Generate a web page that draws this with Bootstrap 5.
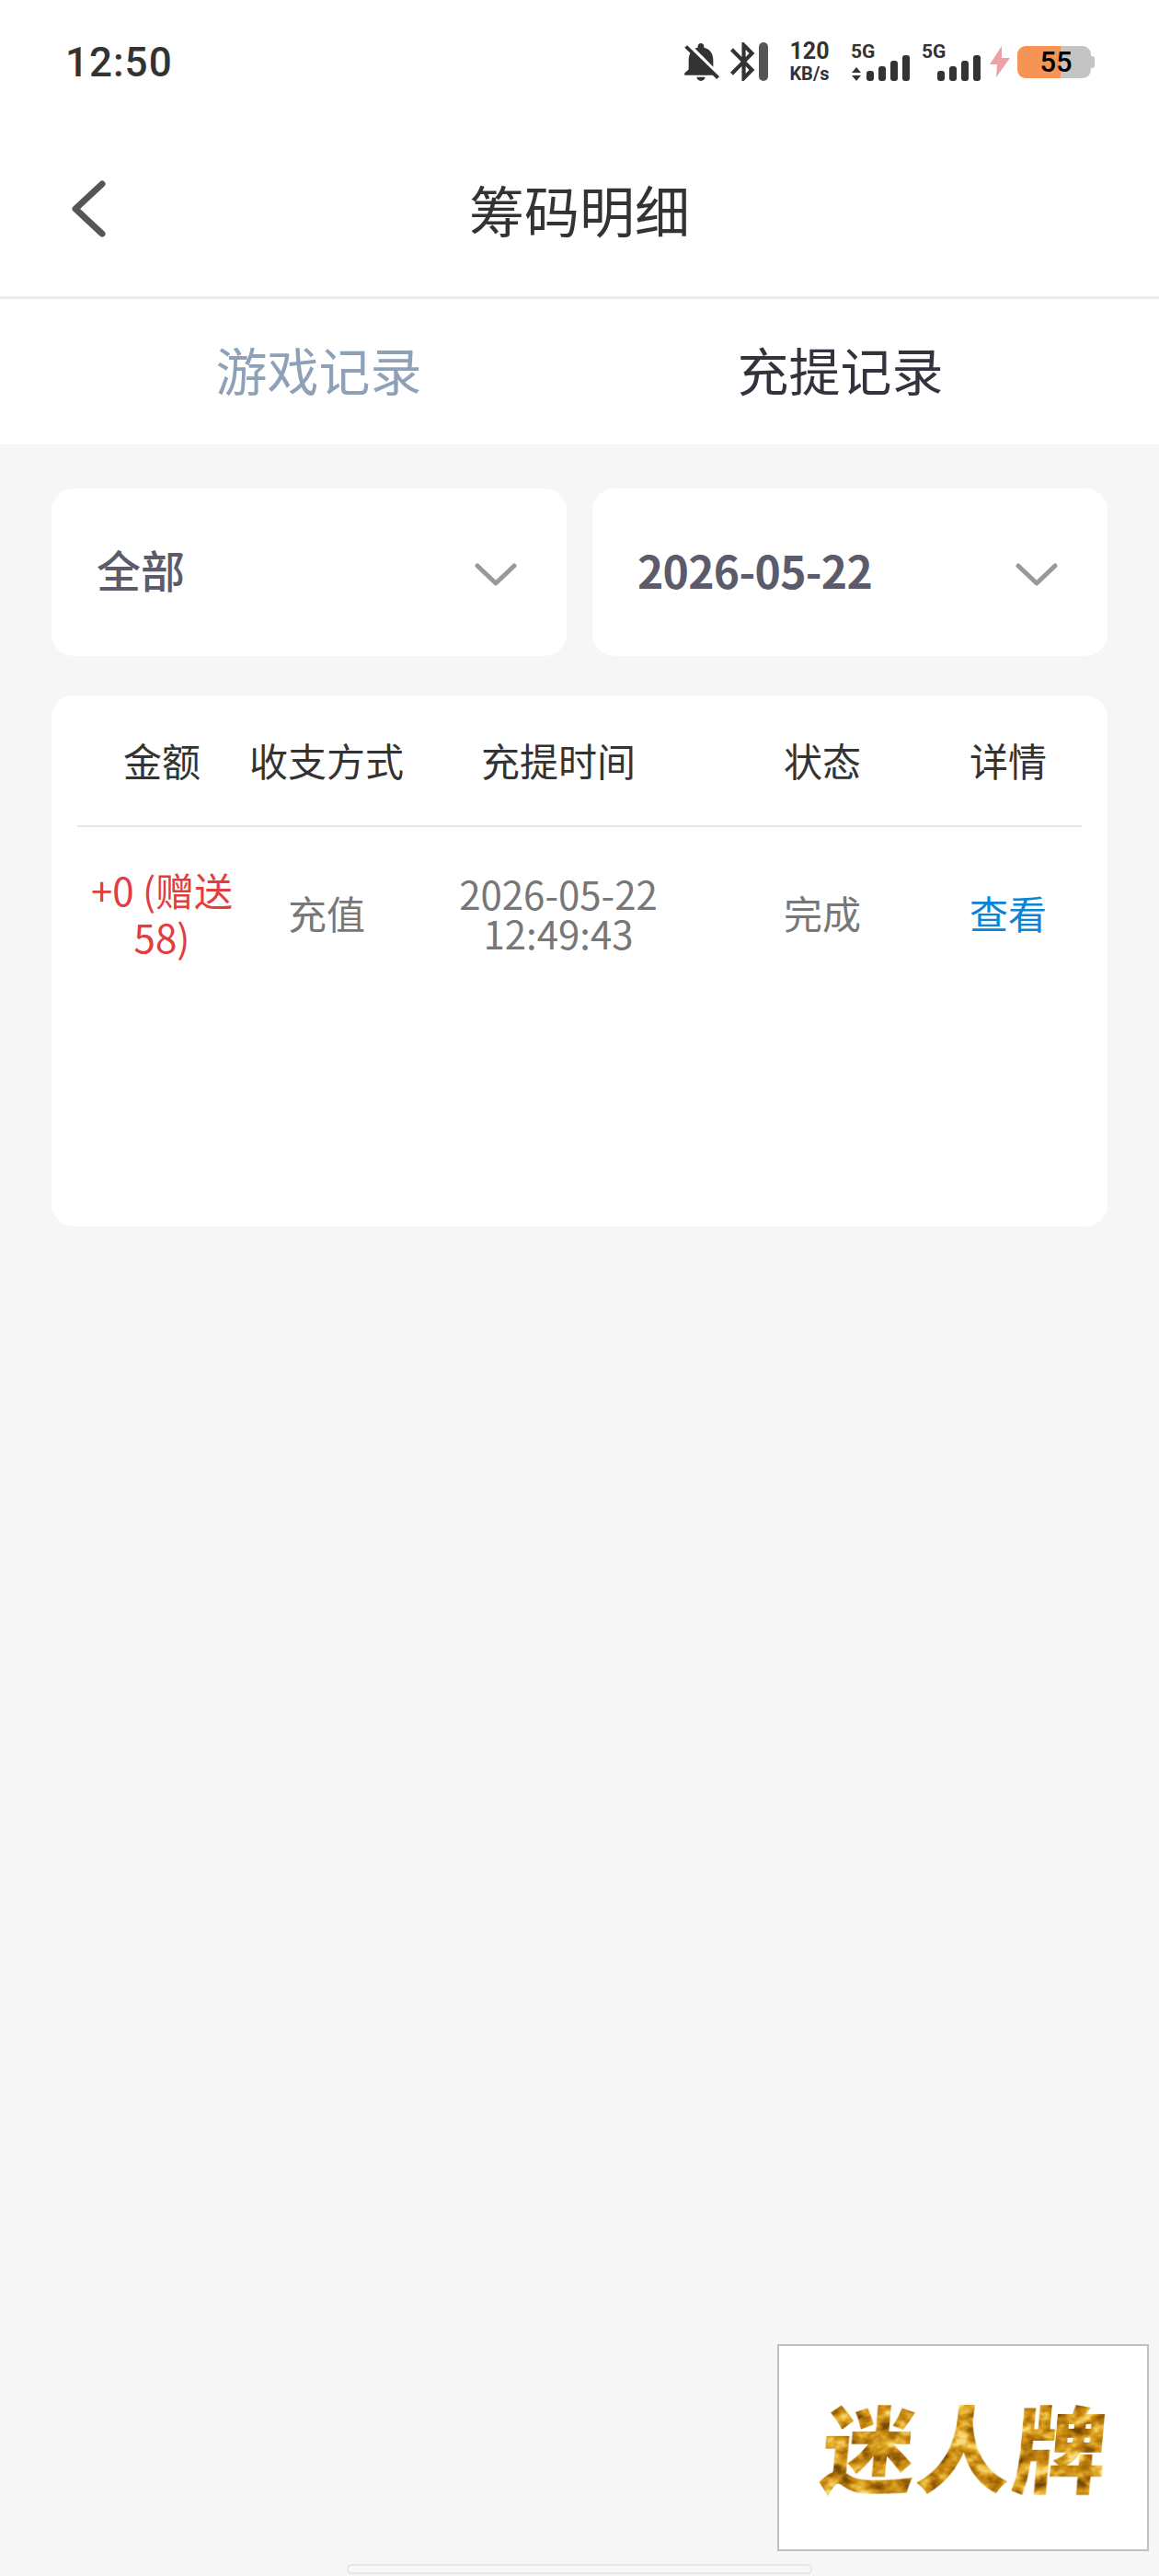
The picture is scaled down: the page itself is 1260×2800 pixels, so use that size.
<!DOCTYPE html>
<html lang="zh-CN">
  <head>
    <meta charset="UTF-8" />
    <meta name="viewport" content="width=device-width, initial-scale=1.0" />
    <title>筹码明细</title>
    <link href="https://cdn.jsdelivr.net/npm/bootstrap@5.3.0/dist/css/bootstrap.min.css" rel="stylesheet" />
    <style>
      body {
        background-color: #f6f6f6;
        font-family: "Noto Sans CJK SC", "Noto Sans", sans-serif;
        min-height: 2800px;
        position: relative;
      }
      /* status bar */
      .status-strip {
        height: 134px;
        padding: 44px 70px 0 71px;
        background-color: #fff;
        color: #333;
      }
      .status-time {
        font: 500 44px/48px Roboto, sans-serif;
        letter-spacing: 1px;
      }
      .status-icons {
        height: 44px;
        font-family: Roboto, sans-serif;
      }
      .speed-box {
        width: 44px;
        margin: 0 23px;
        text-align: center;
        font-weight: 700;
      }
      .speed-num {
        font-size: 25px;
        line-height: 25px;
        margin-bottom: 4px;
      }
      .speed-unit {
        font-size: 20px;
        line-height: 16px;
      }
      .net-group {
        width: 66px;
      }
      .net-label {
        font-size: 21px;
        font-weight: 700;
        line-height: 20px;
        margin-bottom: -6px;
      }
      .power-group {
        height: 48px;
        margin-bottom: -3px;
      }
      .batt-box {
        width: 80px;
        height: 35px;
        border-radius: 9px;
        background: linear-gradient(90deg, #f59455 0 47px, #c4c4c4 47px);
        color: #000;
        font-size: 31px;
        font-weight: 500;
        line-height: 35px;
        text-align: center;
        padding-left: 4px;
      }
      .batt-nub {
        width: 4px;
        height: 13px;
        border-radius: 0 3px 3px 0;
        background-color: #c4c4c4;
      }
      /* title bar */
      .title-bar {
        height: 191px;
        padding-bottom: 3px;
        background-color: #fff;
        border-bottom: 3px solid #ebebeb;
      }
      .back-slot {
        width: 180px;
        padding-left: 76px;
      }
      .title-text {
        font-size: 60px;
        color: #333;
        line-height: 1;
      }
      /* tabs */
      .tab-strip {
        height: 158px;
        padding: 0 63px 6px;
        background-color: #fff;
        font-size: 56px;
      }
      .tab-item {
        width: 50%;
        text-align: center;
        color: #8fa1b9;
      }
      .tab-on {
        color: #33333f;
      }
      /* filters */
      .filter-row {
        padding: 48px 56px 0;
        gap: 28px;
      }
      .filter-box {
        height: 182px;
        background-color: #fff;
        border-radius: 24px;
        padding: 0 54px 0 49px;
        font-size: 48px;
        font-weight: 500;
        color: #5b5b6b;
      }
      .filter-box span {
        margin-bottom: 9px;
      }
      .filter-box .filter-date {
        font-weight: 700;
        letter-spacing: -0.7px;
        margin-bottom: 6px;
      }
      .filter-box svg {
        margin-top: 6px;
      }
      /* table card */
      .record-card {
        margin: 43px 56px 0;
        height: 577px;
        padding: 8px 28px 0;
        background-color: #fff;
        border-radius: 24px;
      }
      .record-table {
        table-layout: fixed;
        width: 100%;
        margin: 0;
        font-size: 42px;
      }
      .record-table th,
      .record-table td {
        border: 0;
        padding: 0;
        text-align: center;
        vertical-align: middle;
        font-weight: 400;
      }
      .record-table th {
        height: 134px;
        padding-bottom: 10px;
        color: #333;
        border-bottom: 2px solid #e6e6e6;
      }
      .record-table td {
        height: 196px;
        padding-bottom: 10px;
        color: #777;
      }
      .record-table td.cell-amount {
        color: #e33d3d;
        line-height: 51px;
        padding: 0 8px 10px;
      }
      .record-table td.cell-time {
        line-height: 43px;
      }
      .record-table td.cell-link {
        color: #0a84d8;
      }
      /* floating logo */
      .logo-box {
        position: absolute;
        left: 845px;
        top: 2548px;
        width: 404px;
        height: 225px;
        padding: 0 0 6px 6px;
        background-color: #fff;
        border: 2px solid #c0c0c0;
      }
      .logo-text {
        font-size: 102px;
        font-weight: 900;
        line-height: 1;
        color: #b8860b;
        letter-spacing: 2px;
        transform: skewX(-5deg);
        filter: url(#goldLeaf);
      }
      .home-pill {
        position: absolute;
        left: 377px;
        top: 2787px;
        width: 506px;
        height: 11px;
        background-color: #f8f8f8;
        border: 2px solid #e6e6e6;
        border-radius: 6px;
      }
    </style>
  </head>
  <body>
    <!-- gold texture for the logo text -->
    <svg width="0" height="0" class="d-block">
      <filter id="goldLeaf" x="-5%" y="-5%" width="110%" height="110%" color-interpolation-filters="sRGB">
        <feTurbulence type="fractalNoise" baseFrequency="0.05 0.07" numOctaves="3" seed="7" />
        <feColorMatrix type="matrix" values="2 0 0 0 -0.5  2 0 0 0 -0.5  2 0 0 0 -0.5  0 0 0 0 1" />
        <feComponentTransfer>
          <feFuncR type="table" tableValues="0.45 0.66 0.80 0.90 0.97" />
          <feFuncG type="table" tableValues="0.28 0.43 0.55 0.70 0.86" />
          <feFuncB type="table" tableValues="0.02 0.04 0.08 0.20 0.48" />
        </feComponentTransfer>
        <feComposite in2="SourceAlpha" operator="in" />
      </filter>
    </svg>

    <div class="status-strip d-flex justify-content-between">
      <div class="status-time">12:50</div>
      <div class="status-icons d-flex align-items-end">
        <svg width="40" height="42" viewBox="3 2 18 20" fill="#333" preserveAspectRatio="none">
          <path d="M20 18.69L7.84 6.14 5.27 3.49 4 4.76l2.8 2.8v.01c-.52.99-.8 2.16-.8 3.42v5l-2 2v1h13.73l2 2L21 19.72l-1-1.03zM12 22c1.11 0 2-.89 2-2h-4c0 1.11.89 2 2 2zm6-7.32V11c0-3.08-1.64-5.64-4.5-6.32V4c0-.83-.67-1.5-1.5-1.5s-1.5.67-1.5 1.5v.68c-.15.03-.29.08-.42.12-.1.03-.2.07-.3.11h-.01c-.2.08-.4.17-.59.27-.01 0-.01 0-.02.01L18 14.68z" />
        </svg>
        <svg width="27" height="42" viewBox="5 2 13 20" fill="#333" preserveAspectRatio="none" style="margin-left: 12px">
          <path d="M17.71 7.71L12 2h-1v7.59L6.41 5 5 6.41 10.59 12 5 17.59 6.41 19 11 14.41V22h1l5.71-5.71-4.3-4.29 4.3-4.29zM13 5.83l1.88 1.88L13 9.59V5.83zm1.88 10.46L13 18.17v-3.76l1.88 1.88z" />
        </svg>
        <svg class="ms-1" width="10" height="42" viewBox="0 0 10 42"><rect width="10" height="42" rx="5" fill="#555" /></svg>
        <div class="speed-box">
          <div class="speed-num">120</div>
          <div class="speed-unit">KB/s</div>
        </div>
        <div class="net-group d-flex flex-column">
          <div class="net-label">5G</div>
          <svg width="66" height="28" viewBox="0 0 66 28" fill="#333">
            <path d="M6 13l5 6H1zM6 28l5-6H1z" />
            <rect x="17" y="17" width="8" height="11" rx="3" />
            <rect x="30" y="12" width="8" height="16" rx="3" />
            <rect x="43" y="6" width="8" height="22" rx="3" />
            <rect x="56" y="0" width="8" height="28" rx="3" />
          </svg>
        </div>
        <div class="net-group d-flex flex-column" style="margin-left: 11px">
          <div class="net-label">5G</div>
          <svg width="66" height="28" viewBox="0 0 66 28" fill="#333">
            <rect x="17" y="17" width="8" height="11" rx="3" />
            <rect x="30" y="12" width="8" height="16" rx="3" />
            <rect x="43" y="6" width="8" height="22" rx="3" />
            <rect x="56" y="0" width="8" height="28" rx="3" />
          </svg>
        </div>
        <div class="power-group d-flex align-items-center ms-2">
          <svg width="22" height="34" viewBox="0 0 22 34" fill="#eda0a5">
            <path d="M13 0L0 20h8L7 34 22 13h-9z" />
          </svg>
          <div class="batt-box ms-2">55</div>
          <div class="batt-nub"></div>
        </div>
      </div>
    </div>

    <div class="title-bar d-flex align-items-center">
      <div class="back-slot">
        <svg class="d-block" width="40" height="64" viewBox="0 0 40 64" fill="none" stroke="#555" stroke-width="7" stroke-linecap="round" stroke-linejoin="round">
          <path d="M35 5L6 32l29 27" />
        </svg>
      </div>
      <div class="title-text flex-grow-1 text-center">筹码明细</div>
      <div class="back-slot"></div>
    </div>

    <div class="tab-strip d-flex align-items-center">
      <div class="tab-item">游戏记录</div>
      <div class="tab-item tab-on">充提记录</div>
    </div>

    <div class="filter-row d-flex">
      <div class="filter-box flex-fill w-50 d-flex align-items-center justify-content-between">
        <span>全部</span>
        <svg width="46" height="26" viewBox="0 0 46 26" fill="none" stroke="#999" stroke-width="5" stroke-linecap="round" stroke-linejoin="round">
          <path d="M3 3l20 19L43 3" />
        </svg>
      </div>
      <div class="filter-box flex-fill w-50 d-flex align-items-center justify-content-between">
        <span class="filter-date">2026-05-22</span>
        <svg width="46" height="26" viewBox="0 0 46 26" fill="none" stroke="#999" stroke-width="5" stroke-linecap="round" stroke-linejoin="round">
          <path d="M3 3l20 19L43 3" />
        </svg>
      </div>
    </div>

    <div class="record-card">
      <table class="table record-table">
        <colgroup>
          <col style="width: 184px" />
          <col style="width: 174px" />
          <col style="width: 330px" />
          <col style="width: 244px" />
          <col style="width: 160px" />
        </colgroup>
        <thead>
          <tr>
            <th>金额</th>
            <th>收支方式</th>
            <th>充提时间</th>
            <th>状态</th>
            <th>详情</th>
          </tr>
        </thead>
        <tbody>
          <tr>
            <td class="cell-amount">+0 (赠送 58)</td>
            <td>充值</td>
            <td class="cell-time">2026-05-22<br />12:49:43</td>
            <td>完成</td>
            <td class="cell-link">查看</td>
          </tr>
        </tbody>
      </table>
    </div>

    <div class="logo-box d-flex align-items-center justify-content-center">
      <span class="logo-text">迷人牌</span>
    </div>
    <div class="home-pill"></div>

    <script src="https://cdn.jsdelivr.net/npm/bootstrap@5.3.0/dist/js/bootstrap.bundle.min.js"></script>
  </body>
</html>
